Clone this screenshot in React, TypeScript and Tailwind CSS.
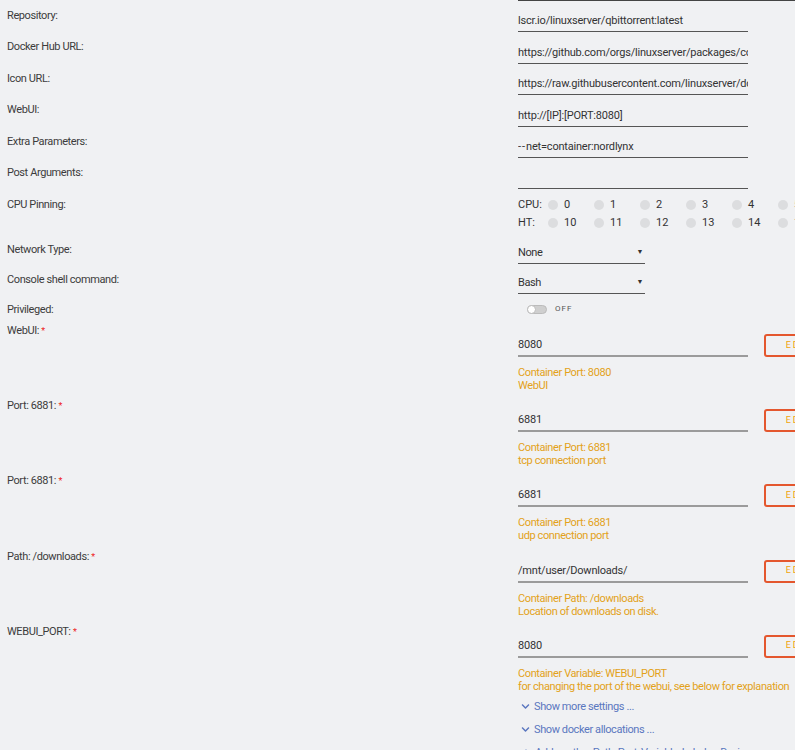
import { FaChevronDown, FaPlus } from "react-icons/fa";

const textRows = [
  { label: "Repository:", value: "lscr.io/linuxserver/qbittorrent:latest" },
  { label: "Docker Hub URL:", value: "https://github.com/orgs/linuxserver/packages/container/package/qbittorrent" },
  { label: "Icon URL:", value: "https://raw.githubusercontent.com/linuxserver/docker-templates/master/linuxserver.io/img/qbittorrent-icon.png" },
  { label: "WebUI:", value: "http://[IP]:[PORT:8080]" },
  { label: "Extra Parameters:", value: "--net=container:nordlynx" },
  { label: "Post Arguments:", value: "" },
];

const ports = [
  { label: "WebUI:", value: "8080", desc1: "Container Port: 8080", desc2: "WebUI" },
  { label: "Port: 6881:", value: "6881", desc1: "Container Port: 6881", desc2: "tcp connection port" },
  { label: "Port: 6881:", value: "6881", desc1: "Container Port: 6881", desc2: "udp connection port" },
  { label: "Path: /downloads:", value: "/mnt/user/Downloads/", desc1: "Container Path: /downloads", desc2: "Location of downloads on disk." },
  {
    label: "WEBUI_PORT:",
    value: "8080",
    desc1: "Container Variable: WEBUI_PORT",
    desc2: "for changing the port of the webui, see below for explanation",
  },
];

const cpus = [0, 1, 2, 3, 4, 5];

function Label({ children, pt }: { children: React.ReactNode; pt: string }) {
  return <div className={`w-[518px] shrink-0 pl-[7px] leading-[14px] text-[#3c3c3c] ${pt}`}>{children}</div>;
}

function Select({ value }: { value: string }) {
  return (
    <div className="w-[127px] h-full border-b border-[#555] flex items-end justify-between pb-[3px] leading-[14px] text-[#333]">
      <span>{value}</span>
      <span className="text-[7px] pr-[2px] pb-[1px]">▼</span>
    </div>
  );
}

// keep the two dashes of "--net" apart, they run together at this size
function Value({ text }: { text: string }) {
  if (text.startsWith("--")) {
    return (
      <span>
        <span className="tracking-[1px]">--</span>
        {text.slice(2)}
      </span>
    );
  }
  return <span>{text}</span>;
}

export default function App() {
  return (
    <div
      className="w-[795px] h-[750px] overflow-hidden bg-[#f0f1f3] text-[11px] tracking-[-0.4px] [font-variant-ligatures:none]"
      style={{ fontFamily: "Roboto, 'Noto Sans', sans-serif" }}
    >
      <div className="ml-[518px] h-[1px] bg-[#444]" />

      {textRows.map((r) => (
        <div key={r.label} className="flex h-[31.4px]">
          <Label pt="pt-[8px]">{r.label}</Label>
          <div className="w-[230px] h-full border-b border-[#555] flex items-end pb-[3px] leading-[14px] text-[#333] tracking-[-0.2px] overflow-hidden whitespace-nowrap">
            <Value text={r.value} />
          </div>
        </div>
      ))}

      <div className="flex h-[44.6px]">
        <Label pt="pt-[9px]">CPU Pinning:</Label>
        <div className="pt-[7px] text-[#333] tracking-normal">
          {["CPU:", "HT:"].map((name, row) => (
            <div key={name} className="flex items-center h-[18px] whitespace-nowrap">
              <span className="w-[30px]">{name}</span>
              {cpus.map((c) => (
                <div key={c} className="flex items-center w-[46px] shrink-0">
                  <span className="w-[10px] h-[10px] rounded-full bg-[#dcdddf]" />
                  <span className="ml-[6px]">{row === 0 ? c : c + 10}</span>
                </div>
              ))}
            </div>
          ))}
        </div>
      </div>

      <div className="flex h-[30px]">
        <Label pt="pt-[9px]">Network Type:</Label>
        <Select value="None" />
      </div>

      <div className="flex h-[30px]">
        <Label pt="pt-[9px]">Console shell command:</Label>
        <Select value="Bash" />
      </div>

      <div className="flex h-[30px]">
        <Label pt="pt-[9px]">Privileged:</Label>
        <div className="flex items-center pt-[11px] pl-[9px] h-[20px]">
          <span className="relative w-[20px] h-[9px] rounded-full bg-[#cfcfcf] border border-[#bbb]">
            <span className="absolute left-[-1px] top-[-1px] w-[9px] h-[9px] rounded-full bg-white border border-[#bbb]" />
          </span>
          <span className="ml-[8px] text-[8px] tracking-[1px] text-[#555]">OFF</span>
        </div>
      </div>

      {ports.map((p, i) => (
        <div key={i} className="flex h-[75.2px]">
          <Label pt="pt-0">
            {p.label} <span className="text-[#e22] text-[9px] align-top">*</span>
          </Label>
          <div className="flex flex-col">
            <div className="flex items-start">
              <div className="w-[230px] h-[33px] border-b-2 border-[#9b9b9b] flex items-end pb-[3px] leading-[14px] text-[#333] tracking-[-0.2px]">
                {p.value}
              </div>
              <div className="ml-[16px] mt-[10px] w-[70px] h-[23px] shrink-0 border-2 border-[#e4572e] rounded-[3px] flex items-center justify-center text-[9px] tracking-[2px] text-[#f0a30a]">
                EDIT
              </div>
            </div>
            <div className="mt-[9px] leading-[13px] text-[#e3a21a] whitespace-nowrap">
              <div>{p.desc1}</div>
              <div>{p.desc2}</div>
            </div>
          </div>
        </div>
      ))}

      <div className="ml-[518px] flex flex-col gap-[9px] text-[#5a77bf] leading-[14px] whitespace-nowrap">
        <div className="flex items-center">
          <FaChevronDown className="w-[9px] h-[9px] ml-[3px] mr-[4px]" />
          <span>Show more settings ...</span>
        </div>
        <div className="flex items-center">
          <FaChevronDown className="w-[9px] h-[9px] ml-[3px] mr-[4px]" />
          <span>Show docker allocations ...</span>
        </div>
        <div className="flex items-center">
          <FaPlus className="w-[8px] h-[8px] ml-[4px] mr-[5px]" />
          <span>Add another Path, Port, Variable, Label or Device</span>
        </div>
      </div>
    </div>
  );
}
